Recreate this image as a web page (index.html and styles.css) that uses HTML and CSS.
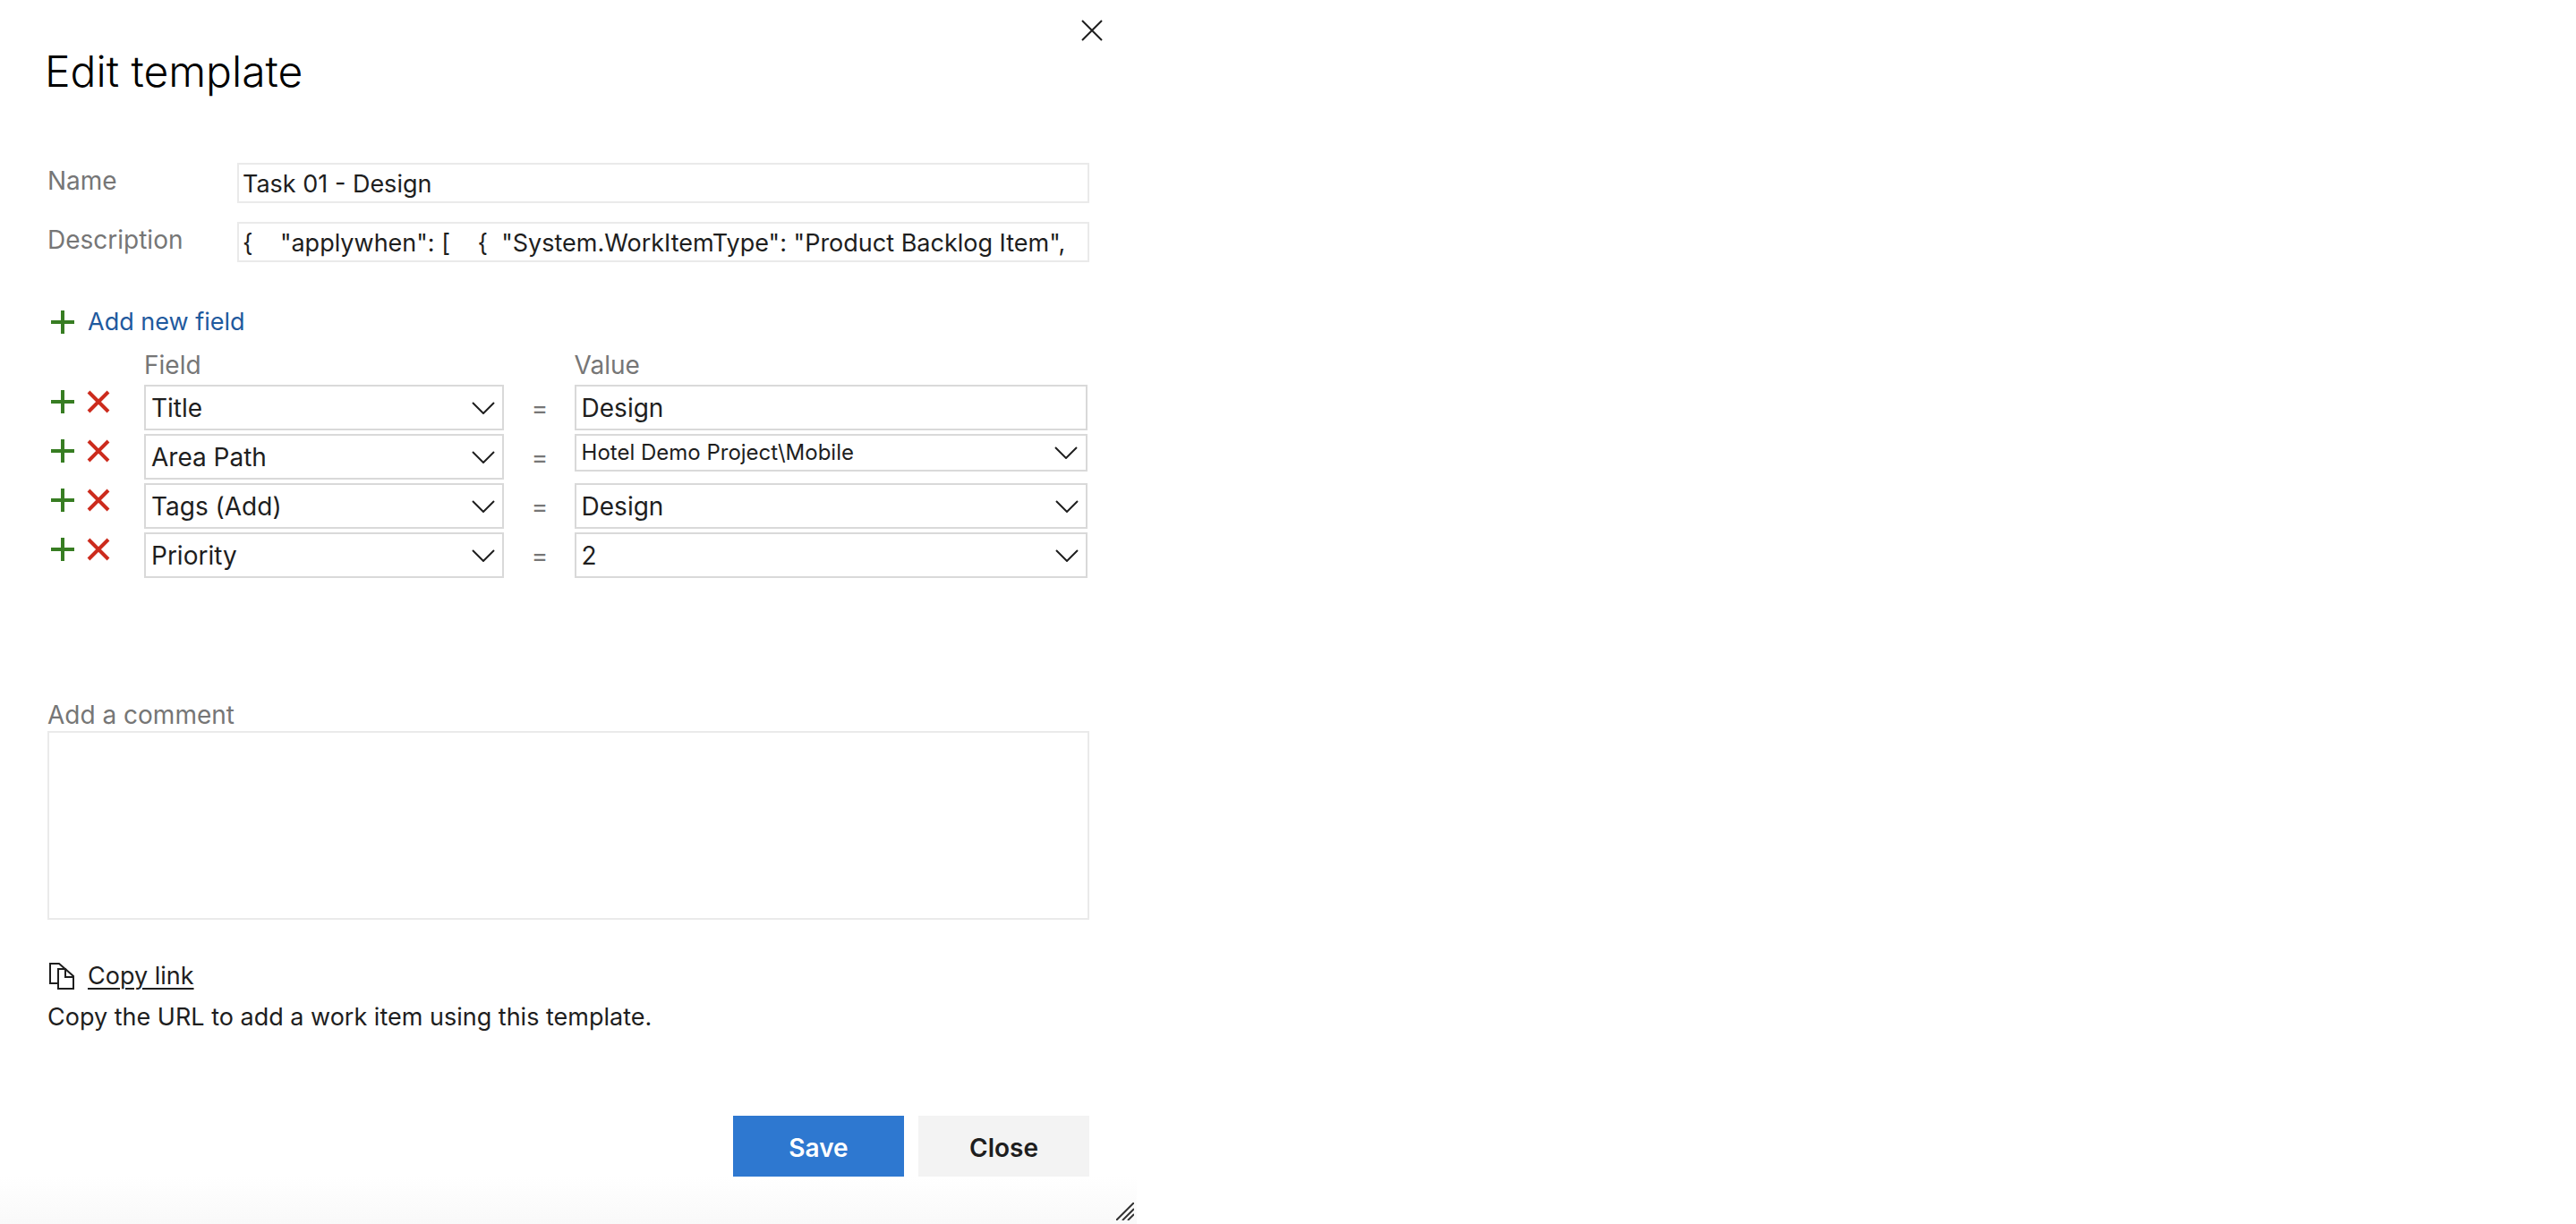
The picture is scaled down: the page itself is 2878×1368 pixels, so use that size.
FILE: index.html
```html
<!DOCTYPE html>
<html lang="en">
<head>
<meta charset="utf-8">
<meta name="viewport" content="width=device-width, initial-scale=1">
<title>Edit template</title>
<link rel="stylesheet" href="styles.css">
</head>
<body>
<svg class="sprite" aria-hidden="true">
  <symbol id="plus" viewBox="0 0 26 26"><path d="M13 0v26M0 13h26" stroke="currentColor" stroke-width="4"/></symbol>
  <symbol id="cross" viewBox="0 0 26 26"><path d="M2 2l22 22M24 2L2 24" stroke="currentColor" stroke-width="4"/></symbol>
  <symbol id="chevron" viewBox="0 0 26 14"><path d="M1 1l12 12L25 1" fill="none" stroke="currentColor" stroke-width="2"/></symbol>
</svg>
<form class="dialog" role="dialog" aria-labelledby="dialog-title">
  <header class="header">
    <h1 class="title" id="dialog-title">Edit template</h1>
    <button class="icon-button dismiss" type="button" aria-label="Dismiss">
      <svg width="24" height="24" viewBox="0 0 24 24"><path d="M1 1l22 22M23 1L1 23" stroke="currentColor" stroke-width="2"/></svg>
    </button>
  </header>

  <div class="details">
    <label class="label" for="name">Name</label>
    <input class="text-input" id="name" type="text" value="Task 01 - Design">
    <label class="label" for="description">Description</label>
    <input class="text-input" id="description" type="text" value='{    "applywhen": [    {  "System.WorkItemType": "Product Backlog Item",'>
  </div>

  <div class="fields">
    <button class="add-field" type="button"><svg class="icon plus"><use href="#plus"/></svg>Add new field</button>
    <div class="row row-head">
      <span class="col-field" id="field-head">Field</span>
      <span id="value-head">Value</span>
    </div>
    <div class="row">
      <div class="actions">
        <button class="icon-button" type="button" aria-label="Add field"><svg class="icon plus"><use href="#plus"/></svg></button>
        <button class="icon-button" type="button" aria-label="Remove field"><svg class="icon cross"><use href="#cross"/></svg></button>
      </div>
      <div class="combo"><select class="control" aria-labelledby="field-head"><option>Title</option></select><svg class="chevron"><use href="#chevron"/></svg></div>
      <span class="equals">=</span>
      <div class="combo"><input class="control" type="text" value="Design" aria-labelledby="value-head"></div>
    </div>
    <div class="row">
      <div class="actions">
        <button class="icon-button" type="button" aria-label="Add field"><svg class="icon plus"><use href="#plus"/></svg></button>
        <button class="icon-button" type="button" aria-label="Remove field"><svg class="icon cross"><use href="#cross"/></svg></button>
      </div>
      <div class="combo"><select class="control" aria-labelledby="field-head"><option>Area Path</option></select><svg class="chevron"><use href="#chevron"/></svg></div>
      <span class="equals">=</span>
      <div class="combo"><select class="control control-small" aria-labelledby="value-head"><option>Hotel Demo Project\Mobile</option></select><svg class="chevron"><use href="#chevron"/></svg></div>
    </div>
    <div class="row">
      <div class="actions">
        <button class="icon-button" type="button" aria-label="Add field"><svg class="icon plus"><use href="#plus"/></svg></button>
        <button class="icon-button" type="button" aria-label="Remove field"><svg class="icon cross"><use href="#cross"/></svg></button>
      </div>
      <div class="combo"><select class="control" aria-labelledby="field-head"><option>Tags (Add)</option></select><svg class="chevron"><use href="#chevron"/></svg></div>
      <span class="equals">=</span>
      <div class="combo"><select class="control" aria-labelledby="value-head"><option>Design</option></select><svg class="chevron"><use href="#chevron"/></svg></div>
    </div>
    <div class="row">
      <div class="actions">
        <button class="icon-button" type="button" aria-label="Add field"><svg class="icon plus"><use href="#plus"/></svg></button>
        <button class="icon-button" type="button" aria-label="Remove field"><svg class="icon cross"><use href="#cross"/></svg></button>
      </div>
      <div class="combo"><select class="control" aria-labelledby="field-head"><option>Priority</option></select><svg class="chevron"><use href="#chevron"/></svg></div>
      <span class="equals">=</span>
      <div class="combo"><select class="control" aria-labelledby="value-head"><option>2</option></select><svg class="chevron"><use href="#chevron"/></svg></div>
    </div>
  </div>

  <div class="comment">
    <label class="label" for="comment">Add a comment</label>
    <textarea class="comment-box" id="comment"></textarea>
  </div>

  <div class="share">
    <div class="copy">
      <svg width="30" height="32" viewBox="0 0 30 32" fill="none" stroke="currentColor" stroke-width="2"><path d="M11 24H3V2h10l8 7"/><path d="M12 8h8l9 8v14H12z"/><path d="M20 8v9h9"/></svg>
      <a class="copy-link" href="#">Copy link</a>
    </div>
    <p class="hint">Copy the URL to add a work item using this template.</p>
  </div>

  <div class="buttons">
    <button class="button primary" type="submit">Save</button>
    <button class="button" type="button">Close</button>
  </div>
  <footer class="footer">
    <svg width="20" height="20" viewBox="0 0 20 20" stroke="#333" stroke-width="2"><path d="M0 20L20 0M7 20L20 7M13 20l7-7"/></svg>
  </footer>
</form>
</body>
</html>
```
FILE: styles.css
```css
* { box-sizing: border-box; }

body {
  margin: 0;
  background: #fff;
  color: #1e1e1e;
  font-family: Inter, "Liberation Sans", sans-serif;
  font-size: 28px;
  line-height: 36px;
}

button, input, select, textarea {
  font: inherit;
  color: inherit;
}

button {
  margin: 0;
  padding: 0;
  border: 0;
  background: none;
}

.sprite { position: absolute; width: 0; height: 0; }

.dialog {
  display: flex;
  flex-direction: column;
  max-width: 1270px;
  min-height: 100vh;
}

.header {
  display: flex;
  justify-content: space-between;
  align-items: flex-start;
  padding: 22px 38px 0 50px;
}

.title {
  margin: 26px 0 0;
  color: #000;
  font-size: 48px;
  line-height: 64px;
  font-weight: 300;
}

.icon-button { display: flex; }

.details {
  display: grid;
  grid-template-columns: 212px 1fr;
  row-gap: 21px;
  margin: 70px 53px 0;
}

.label { color: #767676; }

.details .label { padding-top: 2px; }

.text-input {
  width: 100%;
  height: 45px;
  padding: 2px 4px 0;
  border: 2px solid #eaeaea;
  background: #fff;
  font-size: 27px;
}

.fields { margin: 49px 55px 0 53px; }

.add-field {
  display: flex;
  align-items: center;
  gap: 15px;
  padding-left: 4px;
  color: #1f5a9e;
  font-size: 27px;
}

.icon { width: 26px; height: 26px; }
.plus { color: #377d22; }
.cross { color: #cc2b1d; }

.row {
  display: grid;
  grid-template-columns: 108px 402fr 79px 574fr;
  align-items: start;
  margin-bottom: 4px;
}

.row-head {
  margin: 12px 0 4px;
  color: #767676;
}

.row-head .col-field { grid-column: 2 / 4; }

.actions {
  display: flex;
  gap: 14px;
  padding: 6px 0 0 4px;
}

.equals {
  padding: 8px 0 0 2px;
  color: #767676;
  text-align: center;
}

.combo { display: grid; height: 51px; }

.combo > * { grid-area: 1 / 1; }

.control {
  width: 100%;
  height: 51px;
  padding: 0 6px;
  border: 2px solid #d9d9d9;
  border-radius: 0;
  background: #fff;
  appearance: none;
}

.control-small {
  height: 42px;
  font-size: 24px;
}

.chevron {
  width: 26px;
  height: 14px;
  margin: 19px 10px;
  justify-self: end;
  pointer-events: none;
}

.control-small + .chevron { margin: 14px 11px; }

.comment {
  display: flex;
  flex-direction: column;
  margin: 131px 53px 0;
}

.comment-box {
  height: 211px;
  padding: 6px;
  border: 2px solid #eaeaea;
  resize: none;
}

.share {
  margin: 45px 53px 0;
  font-size: 27px;
}

.copy {
  display: flex;
  align-items: center;
  gap: 15px;
}

.copy-link {
  color: inherit;
  text-underline-offset: 4px;
  text-decoration-thickness: 2px;
}

.hint { margin: 10px 0 0; }

.buttons {
  display: flex;
  justify-content: flex-end;
  gap: 16px;
  margin: 92px 53px 0;
}

.button {
  width: 191px;
  height: 68px;
  padding-top: 4px;
  background: #f3f3f3;
  font-weight: 600;
}

.primary {
  background: #2e78d0;
  color: #fff;
}

.footer {
  display: flex;
  flex: 1;
  justify-content: flex-end;
  align-items: flex-end;
  min-height: 40px;
  padding: 0 3px 4px;
  background: linear-gradient(#fff, #f9f9f9);
}
```
